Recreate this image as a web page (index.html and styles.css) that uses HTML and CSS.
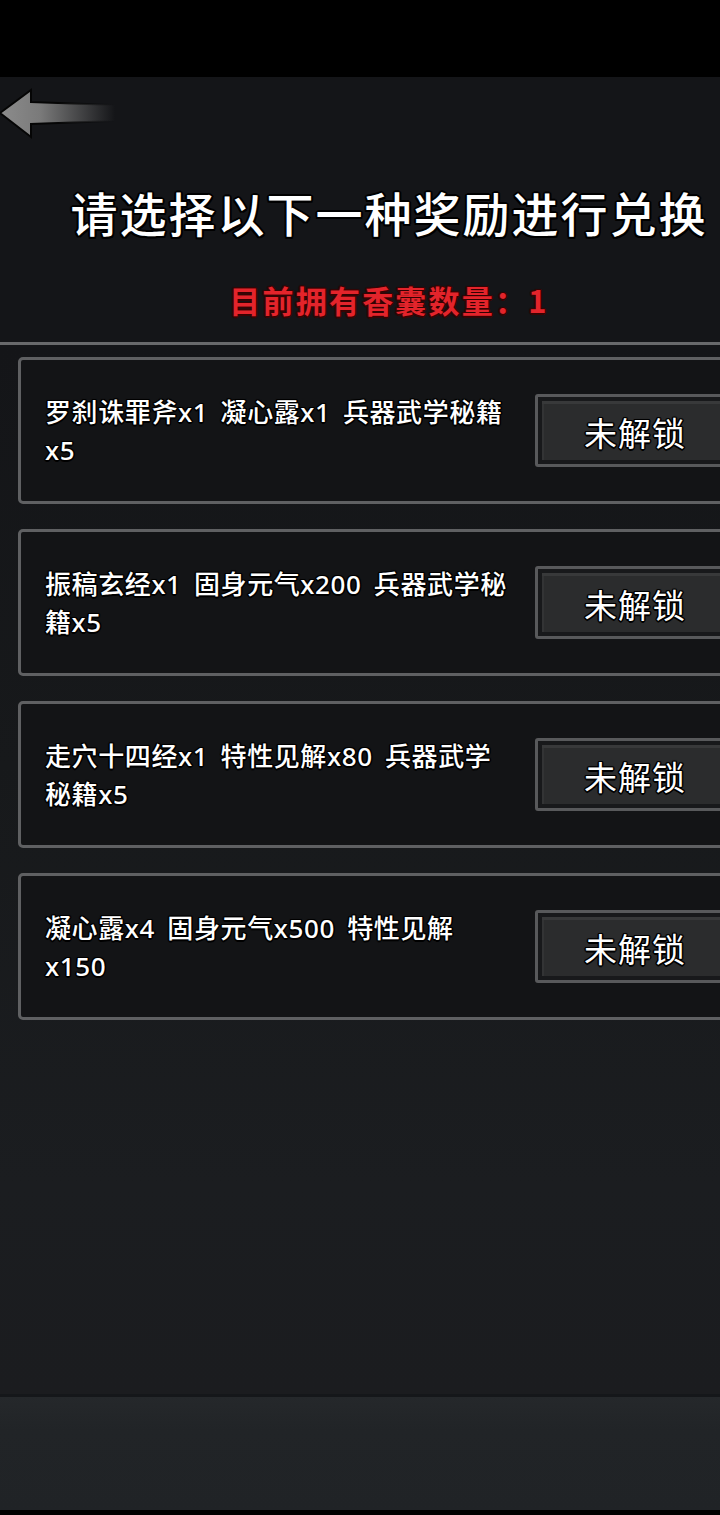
FILE: index.html
```html
<!DOCTYPE html>
<html lang="zh">
<head>
<meta charset="utf-8">
<link rel="stylesheet" href="styles.css">
</head>
<body>
<div class="screen">
  <div class="statusbar"></div>
  <div class="nav">
    <svg class="back" width="120" height="60" viewBox="0 0 120 60">
      <defs>
        <linearGradient id="ag" x1="0" y1="0" x2="1" y2="0">
          <stop offset="0" stop-color="#8c8c8c"/>
          <stop offset="0.35" stop-color="#7a7a7a"/>
          <stop offset="1" stop-color="#7a7a7a" stop-opacity="0"/>
        </linearGradient>
        <linearGradient id="as" x1="0" y1="0" x2="1" y2="0">
          <stop offset="0" stop-color="#050505"/>
          <stop offset="0.5" stop-color="#050505"/>
          <stop offset="1" stop-color="#050505" stop-opacity="0"/>
        </linearGradient>
      </defs>
      <polygon points="1,28 32,5 32,17 116,20 116,36 32,39 32,52" fill="url(#ag)" stroke="url(#as)" stroke-width="2" stroke-linejoin="miter"/>
    </svg>
  </div>
  <div class="header">
    <h1 class="title">请选择以下一种奖励进行兑换</h1>
    <div class="count">目前拥有香囊数量：1</div>
  </div>
  <div class="panel">
    <div class="card">
      <div class="desc">罗刹诛罪斧x1 凝心露x1 兵器武学秘籍<br>x5</div>
      <div class="btn"><div class="btn-inner">未解锁</div></div>
    </div>
    <div class="card">
      <div class="desc">振稿玄经x1 固身元气x200 兵器武学秘<br>籍x5</div>
      <div class="btn"><div class="btn-inner">未解锁</div></div>
    </div>
    <div class="card">
      <div class="desc">走穴十四经x1 特性见解x80 兵器武学<br>秘籍x5</div>
      <div class="btn"><div class="btn-inner">未解锁</div></div>
    </div>
    <div class="card">
      <div class="desc">凝心露x4 固身元气x500 特性见解<br>x150</div>
      <div class="btn"><div class="btn-inner">未解锁</div></div>
    </div>
  </div>
  <div class="footer"></div>
  <div class="bottombar"></div>
</div>
</body>
</html>
```

FILE: styles.css
```css
html, body {
  margin: 0;
  padding: 0;
  background: #000;
}
body {
  width: 720px;
  height: 1515px;
  overflow: hidden;
  font-family: "Noto Sans CJK SC", "Noto Sans", sans-serif;
  color: #fff;
}
.screen {
  width: 720px;
  height: 1515px;
  display: flex;
  flex-direction: column;
  overflow: hidden;
  background: #141518;
}
.statusbar {
  height: 77px;
  background: #000;
  flex: none;
}
.nav {
  height: 73px;
  flex: none;
  background: #141518;
}
.back {
  display: block;
  margin-top: 8px;
  margin-left: -1px;
}
.header {
  flex: none;
  padding-left: 58px;
  text-align: center;
  background: #141518;
  height: 192px;
}
.title {
  margin: 34px 0 0;
  font-size: 47px;
  font-weight: 500;
  line-height: 56px;
  letter-spacing: 2px;
  color: #fff;
  text-shadow: 0 0 2px #000, 2px 0 0 #000, -2px 0 0 #000, 0 2px 0 #000, 0 -2px 0 #000,
    1.5px 1.5px 0 #000, -1.5px 1.5px 0 #000, 1.5px -1.5px 0 #000, -1.5px -1.5px 0 #000;
}
.count {
  margin-top: 40px;
  font-size: 31px;
  font-weight: 700;
  line-height: 40px;
  letter-spacing: 2.2px;
  color: #e3242b;
  text-shadow: 0 0 2px #2a0000, 1.5px 0 0 #3a0505, -1.5px 0 0 #3a0505, 0 1.5px 0 #3a0505, 0 -1.5px 0 #3a0505,
    1px 1px 0 #3a0505, -1px 1px 0 #3a0505, 1px -1px 0 #3a0505, -1px -1px 0 #3a0505;
}
.panel {
  flex: none;
  height: 1055px;
  border-top: 3px solid #68696b;
  padding: 12px 0 0 18px;
  box-sizing: border-box;
  display: flex;
  flex-direction: column;
  gap: 25px;
  background: linear-gradient(180deg, #141518 0%, #17191b 40%, #1b1d20 80%, #1b1c1f 100%);
  border-bottom: 3px solid #15171a;
}
.card {
  flex: none;
  width: 740px;
  height: 147px;
  box-sizing: border-box;
  border: 3px solid #5f6062;
  border-radius: 5px;
  background: #131416;
  display: flex;
  align-items: center;
  padding-left: 24px;
}
.desc {
  width: 490px;
  flex: none;
  font-family: "Noto Sans", "Noto Sans CJK SC", sans-serif;
  font-size: 26px;
  font-weight: 500;
  line-height: 38px;
  letter-spacing: 0.6px;
  word-spacing: 5px;
  white-space: nowrap;
  color: #fff;
  text-shadow: 0 0 2px #000, 1.5px 0 0 #000, -1.5px 0 0 #000, 0 1.5px 0 #000, 0 -1.5px 0 #000,
    1px 1px 0 #000, -1px 1px 0 #000, 1px -1px 0 #000, -1px -1px 0 #000;
}
.btn {
  flex: none;
  width: 200px;
  height: 73px;
  box-sizing: border-box;
  border: 3px solid #58595b;
  border-radius: 3px;
  background: #18191b;
  padding: 4px;
}
.btn-inner {
  height: 100%;
  box-sizing: border-box;
  background: #2b2c2d;
  border-top: 3px solid #38393a;
  box-shadow: inset 2px 0 0 #333435;
  display: flex;
  align-items: center;
  justify-content: center;
  font-size: 33px;
  letter-spacing: 1px;
  padding-left: 0;
  color: #fff;
  text-shadow: 0 0 2px #000, 1.5px 0 0 #000, -1.5px 0 0 #000, 0 1.5px 0 #000, 0 -1.5px 0 #000,
    1px 1px 0 #000, -1px 1px 0 #000, 1px -1px 0 #000, -1px -1px 0 #000;
}
.footer {
  flex: none;
  height: 113px;
  background: linear-gradient(180deg, #25282b 0%, #212427 30%, #202326 100%);
}
.bottombar {
  flex: 1;
  background: #000;
}
```
